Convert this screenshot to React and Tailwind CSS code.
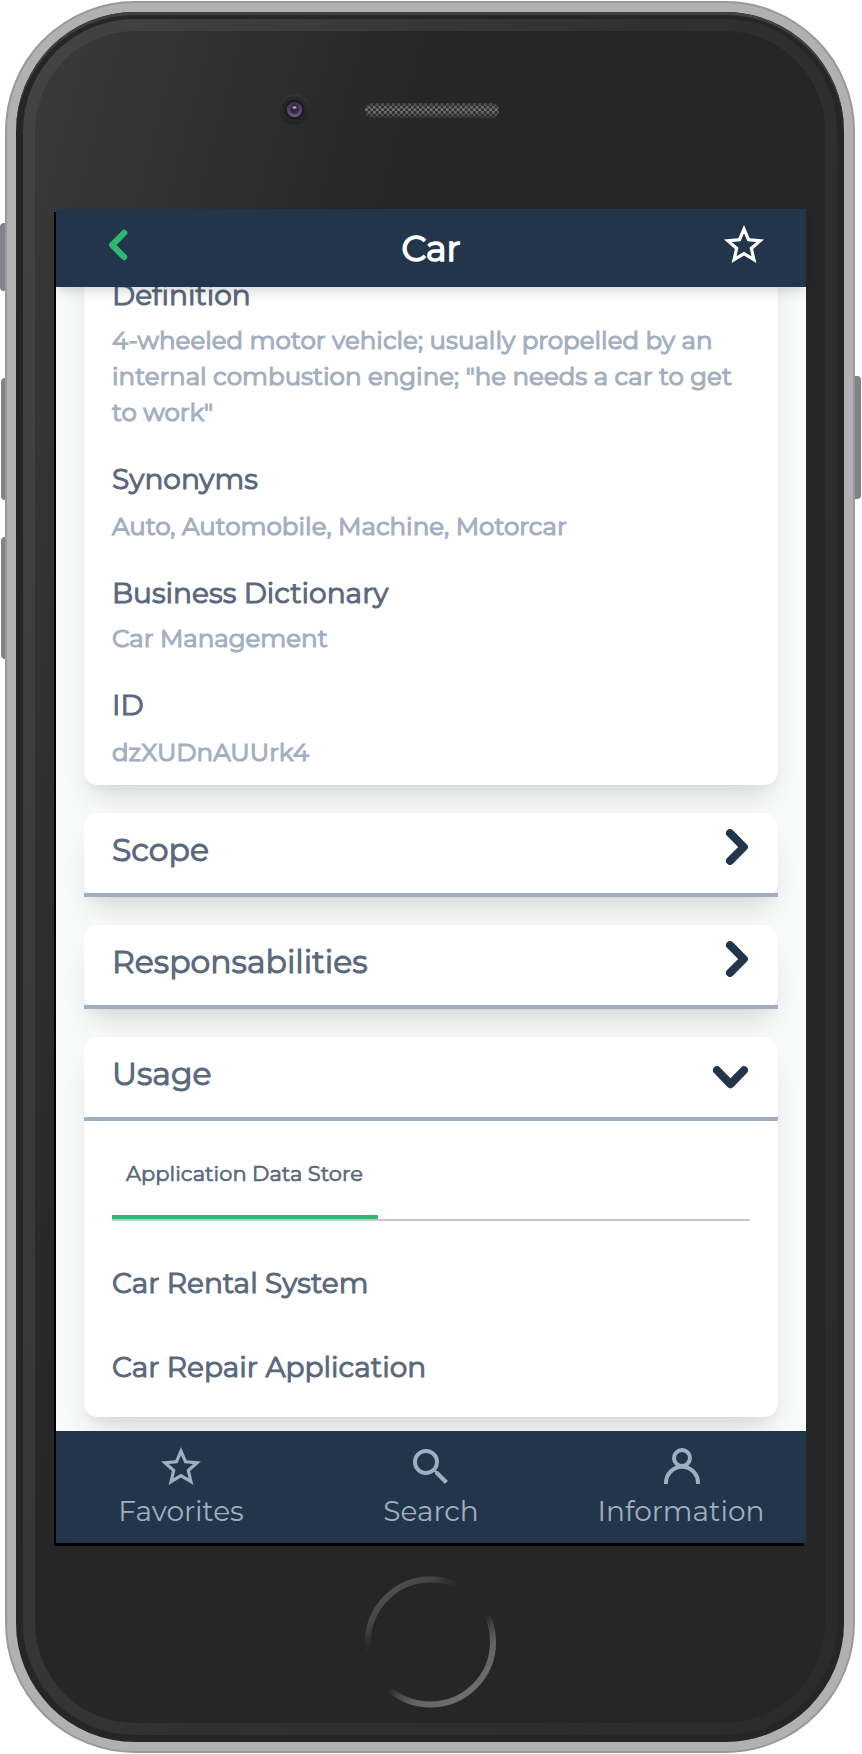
import { MdStarBorder, MdSearch } from "react-icons/md";

const details = [
  {
    title: "Definition",
    lines: [
      "4-wheeled motor vehicle; usually propelled by an",
      'internal combustion engine; "he needs a car to get',
      'to work"',
    ],
    gap: "mt-1.5",
  },
  { title: "Synonyms", lines: ["Auto, Automobile, Machine, Motorcar"], gap: "mt-2" },
  { title: "Business Dictionary", lines: ["Car Management"], gap: "mt-1.5" },
  { title: "ID", lines: ["dzXUDnAUUrk4"], gap: "mt-2" },
];

const CARD =
  "shrink-0 rounded-[14px] bg-white shadow-[0_20px_30px_-6px_rgba(0,0,0,0.1),0_8px_12px_-4px_rgba(0,0,0,0.05)]";

function ChevronRight() {
  return (
    <svg className="mt-4 w-9 h-9" viewBox="0 0 36 36" fill="none">
      <path d="M18 4.200 31.800 18l-13.800 13.800" stroke="#23354b" strokeWidth="8.100" strokeLinecap="round" strokeLinejoin="round" />
    </svg>
  );
}

function ChevronDown() {
  return (
    <svg className="mt-[22px] w-9 h-9" viewBox="0 0 36 36" fill="none">
      <path d="M5 11.200 18.500 25.100l13.500-13.900" stroke="#23354b" strokeWidth="8.100" strokeLinecap="round" strokeLinejoin="round" />
    </svg>
  );
}

function CardHeader({ title, open }) {
  return (
    <div className="flex h-[84px] justify-between border-b-4 border-[#a0aec0] pl-7 pr-[30px]">
      <h2 className="pt-4 text-[31.5px] leading-[42px] text-[#5a687c] [-webkit-text-stroke:1px_#5a687c]">{title}</h2>
      {open ? <ChevronDown /> : <ChevronRight />}
    </div>
  );
}

function Person() {
  return (
    <svg className="w-12 h-12" viewBox="0 0 48 48" fill="none" stroke="currentColor" strokeWidth="4">
      <circle cx="25" cy="15" r="8" />
      <path d="M9 41v-1.200a16 16 0 0 1 32 0V41" />
    </svg>
  );
}

function NavItem({ icon, label }) {
  return (
    <div className="flex flex-1 flex-col items-center pt-3 text-[#a0aec0]">
      {icon}
      <span className="pt-px text-[28px] leading-[38px]">{label}</span>
    </div>
  );
}

function Camera() {
  return (
    <svg className="w-[31px] h-[31px]" viewBox="0 0 31 31">
      <defs>
        <linearGradient id="rim" x1="0" y1="0" x2="0" y2="1">
          <stop offset="0" stopColor="#343434" />
          <stop offset="1" stopColor="#222222" />
        </linearGradient>
        <linearGradient id="lens" x1="0" y1="0" x2="0" y2="1">
          <stop offset="0" stopColor="#382a50" />
          <stop offset="1" stopColor="#6b5a88" />
        </linearGradient>
      </defs>
      <circle cx="15.500" cy="15.500" r="15.500" fill="url(#rim)" />
      <circle cx="15.500" cy="15.500" r="13" fill="#272727" />
      <circle cx="15.500" cy="15.500" r="10" fill="#1a1a1e" />
      <circle cx="15.500" cy="15.500" r="7.800" fill="url(#lens)" />
      <circle cx="15.500" cy="15.200" r="4.500" fill="#30283f" />
      <ellipse cx="15.500" cy="13.500" rx="2" ry="1.200" fill="#b3a9c0" />
    </svg>
  );
}

function Speaker() {
  return (
    <svg className="mt-[3px] w-[134px] h-[15px]" viewBox="0 0 134 15">
      <defs>
        <pattern id="mesh" width="5.400" height="5.400" patternUnits="userSpaceOnUse">
          <rect width="5.400" height="5.400" fill="#2e2e2e" />
          <rect width="2.700" height="2.700" fill="#757575" />
          <rect x="2.700" y="2.700" width="2.700" height="2.700" fill="#757575" />
        </pattern>
        <linearGradient id="meshShade" x1="0" y1="0" x2="0" y2="1">
          <stop offset="0" stopColor="#262626" stopOpacity="0.6" />
          <stop offset="0.35" stopColor="#262626" stopOpacity="0" />
          <stop offset="0.6" stopColor="#262626" stopOpacity="0.1" />
          <stop offset="1" stopColor="#262626" stopOpacity="0.75" />
        </linearGradient>
      </defs>
      <rect width="134" height="15" rx="7.500" fill="url(#mesh)" />
      <rect width="134" height="15" rx="7.500" fill="url(#meshShade)" />
    </svg>
  );
}

function HomeButton() {
  return (
    <svg className="mt-[33px] ml-[330px] w-[132px] h-[132px]" viewBox="0 0 132 132" fill="none">
      <defs>
        <linearGradient id="ring" gradientUnits="userSpaceOnUse" x1="27" y1="14" x2="105" y2="118">
          <stop offset="0" stopColor="#4e4e4e" />
          <stop offset="0.120" stopColor="#444444" />
          <stop offset="0.200" stopColor="#303030" />
          <stop offset="0.280" stopColor="#262626" />
          <stop offset="0.590" stopColor="#262626" />
          <stop offset="0.680" stopColor="#464646" />
          <stop offset="0.800" stopColor="#646464" />
          <stop offset="1" stopColor="#6e6e6e" />
        </linearGradient>
      </defs>
      <circle cx="65.500" cy="66" r="62.500" stroke="url(#ring)" strokeWidth="6" />
    </svg>
  );
}

function Screen() {
  return (
    <div className="ml-[21px] flex h-[1334px] w-[750px] flex-col bg-[#f9fbfa] shadow-[-2px_3px_0_#000]">
      <header className="relative z-10 flex h-[78px] shrink-0 items-start justify-between bg-[#23354b] pl-[53px] pr-[38px] text-white shadow-[0_8px_12px_-2px_rgba(0,0,0,0.1),0_4px_8px_-2px_rgba(0,0,0,0.06)]">
        <svg className="mt-5 h-8 w-12" viewBox="0 0 48 32" fill="none">
          <path d="M15.200 3.900 3.200 16l12 12.100" stroke="#2eb872" strokeWidth="6.200" strokeLinecap="round" strokeLinejoin="round" />
        </svg>
        <h1 className="mr-[15px] pt-[19px] text-[35px] leading-[42px] [-webkit-text-stroke:1.5px_#fff]">Car</h1>
        <MdStarBorder className="mt-3" size={48} />
      </header>

      <main className="flex min-h-0 flex-1 flex-col justify-end gap-7 overflow-hidden px-7 pb-3.5">
        <section className={`${CARD} flex flex-col gap-7 px-7 pb-[15px] pt-7`}>
          {details.map((d) => (
            <div key={d.title}>
              <h3 className="text-[28px] leading-[42px] text-[#5a687c] [font-variant-ligatures:none] [-webkit-text-stroke:1px_#5a687c]">{d.title}</h3>
              <div className={`${d.gap} text-[24.5px] leading-9 whitespace-nowrap text-[#a3afc0] [-webkit-text-stroke:1.1px_#a3afc0]`}>
                {d.lines.map((l) => (
                  <p key={l}>{l}</p>
                ))}
              </div>
            </div>
          ))}
        </section>

        <section className={CARD}>
          <CardHeader title="Scope" />
        </section>

        <section className={CARD}>
          <CardHeader title="Responsabilities" />
        </section>

        <section className={CARD}>
          <CardHeader title="Usage" open />
          <div className="h-[296px] px-7 pt-7">
            <div className="flex border-b-2 border-[#c5c9cf]">
              <div className="h-[70px] w-[266px] border-b-4 border-[#2eb872] pl-3.5 pt-[9px] text-[21px] leading-[31px] whitespace-nowrap text-[#5a687c] [-webkit-text-stroke:0.7px_#5a687c]">
                Application Data Store
              </div>
            </div>
            <ul className="flex flex-col gap-[42px] pt-[41px] text-[28px] leading-[42px] text-[#5a687c] [-webkit-text-stroke:1px_#5a687c]">
              <li>Car Rental System</li>
              <li>Car Repair Application</li>
            </ul>
          </div>
        </section>
      </main>

      <nav className="relative z-10 flex h-28 shrink-0 bg-[#23354b]">
        <NavItem icon={<MdStarBorder size={48} />} label="Favorites" />
        <NavItem icon={<MdSearch size={48} />} label="Search" />
        <NavItem icon={<Person />} label="Information" />
      </nav>
    </div>
  );
}

export default function App() {
  return (
    <div className="relative h-[1754px] w-[862px] overflow-hidden bg-white pl-[5px] pt-px font-[Montserrat,Inter,sans-serif]">
      <div className="absolute left-0 top-[223px] h-[68px] w-2 rounded-l bg-[#828288]" />
      <div className="absolute left-px top-[378px] h-[122px] w-2 rounded-l bg-[#828288]" />
      <div className="absolute left-px top-[537px] h-[122px] w-2 rounded-l bg-[#828288]" />
      <div className="absolute left-[853px] top-[376px] h-[123px] w-2 rounded-r bg-[#828288]" />

      <div className="relative h-[1752px] w-[850px] rounded-[130px] border-2 border-[#999999] bg-[#b1b1b1] p-[9px]">
        <div className="h-[1730px] rounded-[119px] bg-[#262626] p-[7px] shadow-[inset_0_3px_0_#404040]">
          <div className="h-[1716px] rounded-[112px] bg-[linear-gradient(105deg,#444444_0%,#303030_50%,#2b2b2b_100%)] p-3">
            <div className="h-[1692px] overflow-hidden rounded-[100px] bg-[linear-gradient(105deg,#3a3a3a_0px,#262626_390px)]">
              <div className="flex h-[178px] items-start gap-[55px] pl-[244px] pt-[63px]">
                <Camera />
                <div className="pt-1.5">
                  <Speaker />
                </div>
              </div>
              <Screen />
              <HomeButton />
            </div>
          </div>
        </div>
      </div>
    </div>
  );
}
